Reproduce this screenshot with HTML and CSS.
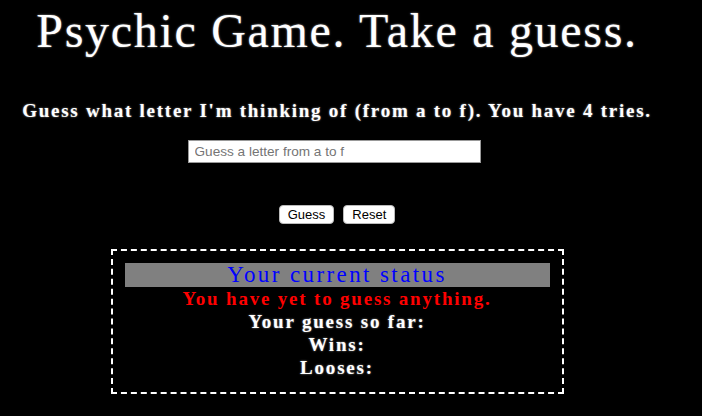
FILE: index.html
```html
<!DOCTYPE html>
<html>
<head>
<meta charset="utf-8">
<link rel="stylesheet" href="styles.css">
</head>
<body>
<div class="page">
  <h1 class="title">Psychic Game. Take a guess.</h1>
  <p class="intro">Guess what letter I'm thinking of (from a to f). You have 4 tries.</p>
  <div class="field-row">
    <input class="guess-input" type="text" placeholder="Guess a letter from a to f">
  </div>
  <div class="buttons">
    <button class="btn">Guess</button>
    <button class="btn">Reset</button>
  </div>
  <div class="status">
    <div class="status-head">Your current status</div>
    <div class="status-msg">You have yet to guess anything.</div>
    <div class="status-line">Your guess so far:</div>
    <div class="status-line">Wins:</div>
    <div class="status-line">Looses:</div>
  </div>
</div>
</body>
</html>
```
FILE: styles.css
```css
html, body {
  background: #000;
}
body {
  margin: 8px;
  color: #fff;
  font-family: "Liberation Serif", "Times New Roman", serif;
}
.page {
  width: 658px;
  text-align: center;
}
.title {
  margin: -2px 0 0;
  font-size: 48px;
  font-weight: normal;
  line-height: 50px;
  letter-spacing: 1.7px;
  text-shadow: 0 0 2px #aaa;
}
.intro {
  margin: 44px 0 0;
  font-size: 19px;
  line-height: 22px;
  font-weight: bold;
  letter-spacing: 1.75px;
  text-shadow: 0 0 2px #999;
}
.field-row {
  margin-top: 18px;
  display: flex;
  justify-content: center;
}
.guess-input {
  width: 293px;
  height: 23px;
  box-sizing: border-box;
  border: 1px solid #999;
  background: #fff;
  padding: 2px 6px;
  font-family: "Liberation Sans", Arial, sans-serif;
  font-size: 13.6px;
  margin-left: -6px;
}
.guess-input::placeholder {
  color: #757575;
}
.buttons {
  margin-top: 42px;
  display: flex;
  justify-content: center;
  gap: 9px;
}
.btn {
  height: 19px;
  padding: 0 8px;
  border: 1px solid #bbb;
  border-radius: 4px;
  background: #fff;
  color: #000;
  font-family: "Liberation Sans", Arial, sans-serif;
  font-size: 13px;
  line-height: 17px;
}
.status {
  margin: 25px auto 0;
  width: 453px;
  box-sizing: border-box;
  border: 2px dashed #fff;
  padding: 12px 12px 13px;
}
.status-head {
  background: #808080;
  color: #0000ff;
  font-size: 23px;
  line-height: 24px;
  letter-spacing: 2.4px;
}
.status-msg {
  color: #ff0000;
  font-size: 19px;
  font-weight: bold;
  line-height: 23px;
  letter-spacing: 1.8px;
}
.status-line {
  font-size: 19px;
  font-weight: bold;
  line-height: 23px;
  letter-spacing: 1.8px;
  text-shadow: 0 0 2px #999;
}
```
